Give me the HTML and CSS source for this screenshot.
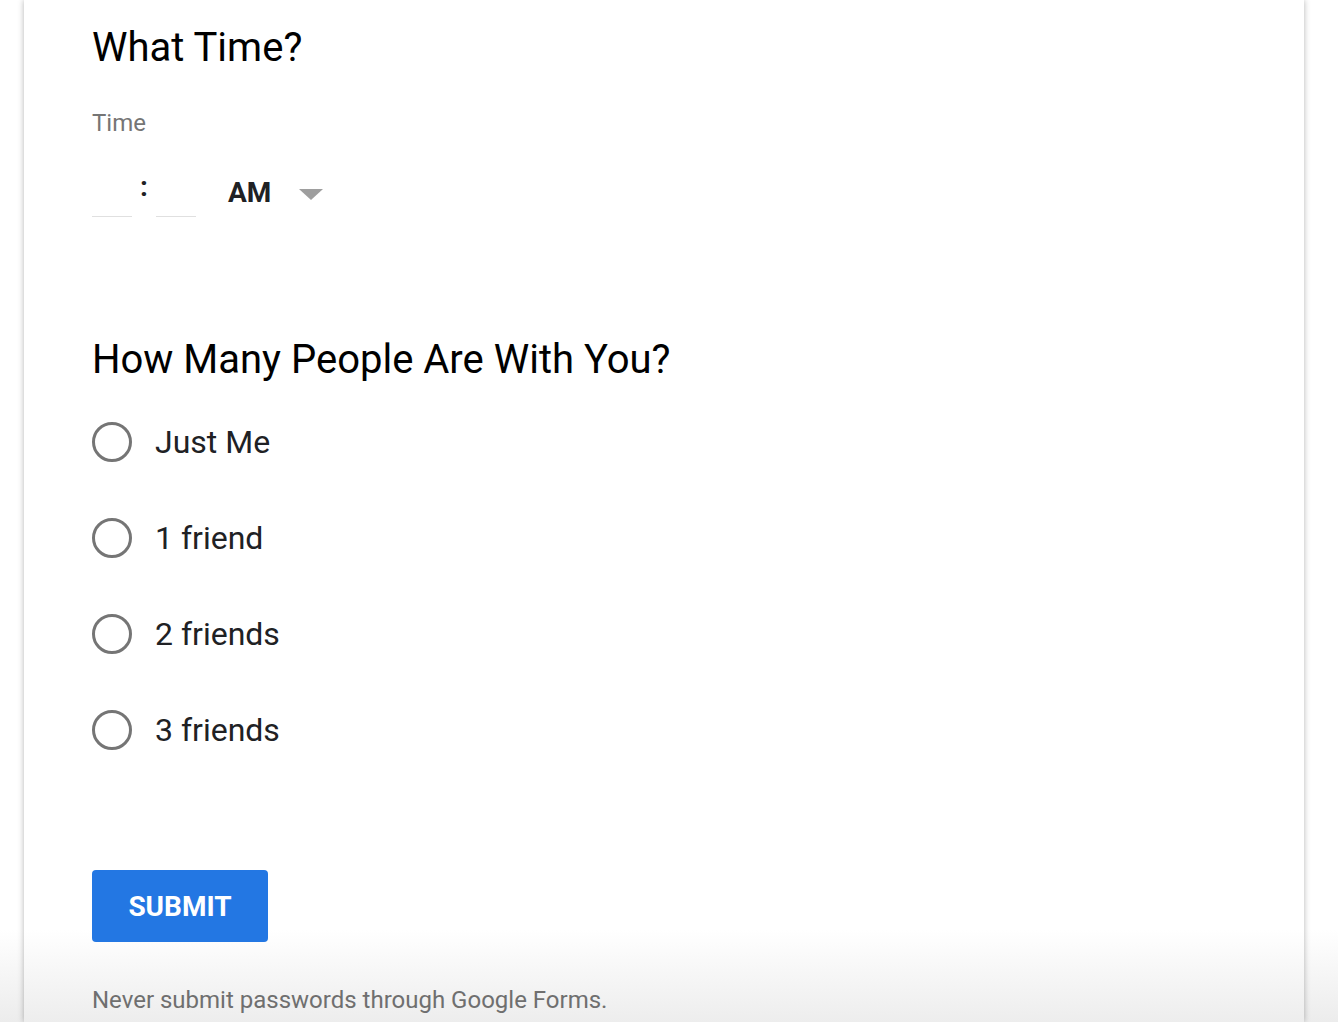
FILE: index.html
```html
<!DOCTYPE html>
<html>
<head>
<meta charset="utf-8">
<link rel="stylesheet" href="styles.css">
</head>
<body>
<div class="card">
  <section class="question">
    <h2 class="q-title q-first">What Time?</h2>
    <div class="label">Time</div>
    <div class="time-row">
      <span class="time-field"></span>
      <span class="colon">:</span>
      <span class="time-field"></span>
      <span class="ampm">AM</span>
      <span class="caret"></span>
    </div>
  </section>
  <section class="question">
    <h2 class="q-title q-second">How Many People Are With You?</h2>
    <div class="options">
      <div class="option"><span class="radio"></span><span class="opt-text">Just Me</span></div>
      <div class="option"><span class="radio"></span><span class="opt-text">1 friend</span></div>
      <div class="option"><span class="radio"></span><span class="opt-text">2 friends</span></div>
      <div class="option"><span class="radio"></span><span class="opt-text">3 friends</span></div>
    </div>
  </section>
  <div class="actions">
    <button class="submit">SUBMIT</button>
  </div>
  <p class="footer">Never submit passwords through Google Forms.</p>
</div>
</body>
</html>
```
FILE: styles.css
```css
html, body {
  margin: 0;
  padding: 0;
  height: 1022px;
  overflow: hidden;
}
body {
  font-family: Roboto, "Liberation Sans", sans-serif;
  background: linear-gradient(to bottom, #ffffff 0, #ffffff 930px, #ececec 1022px);
  padding-top: 0;
}
.card {
  margin-left: 24px;
  width: 1280px;
  height: 1022px;
  background: linear-gradient(to bottom, #ffffff 0, #ffffff 930px, #ededed 1022px);
  box-shadow: 0 0 6px rgba(0,0,0,0.3);
  padding-left: 68px;
  box-sizing: border-box;
}
.q-title {
  margin: 0;
  font-weight: 400;
  color: #000;
  font-size: 40px;
  line-height: 48px;
}
.q-first {
  padding-top: 24px;
}
.label {
  margin-top: 38px;
  font-size: 24px;
  line-height: 26px;
  color: #757575;
}
.time-row {
  display: flex;
  align-items: flex-end;
  margin-top: 35px;
  height: 46px;
}
.time-field {
  width: 40px;
  height: 0;
  border-bottom: 1px solid #e0e0e0;
}
.colon {
  width: 24px;
  text-align: center;
  font-size: 28px;
  font-weight: 700;
  color: #202124;
  align-self: flex-start;
  line-height: 26px;
  margin-top: 3px;
}
.ampm {
  margin-left: 32px;
  font-size: 28px;
  font-weight: 700;
  color: #202124;
  align-self: flex-start;
  line-height: 32px;
  margin-top: 6px;
}
.caret {
  align-self: flex-start;
  margin-left: 28px;
  margin-top: 18px;
  width: 0;
  height: 0;
  border-left: 12px solid transparent;
  border-right: 12px solid transparent;
  border-top: 11px solid #9e9e9e;
}
.q-second {
  margin-top: 119px;
}
.options {
  display: flex;
  flex-direction: column;
  gap: 56px;
  margin-top: 38px;
}
.option {
  display: flex;
  align-items: center;
  height: 40px;
}
.radio {
  width: 40px;
  height: 40px;
  box-sizing: border-box;
  border: 3px solid #757575;
  border-radius: 50%;
}
.opt-text {
  margin-left: 23px;
  font-size: 32px;
  color: #202124;
}
.actions {
  margin-top: 120px;
}
.submit {
  width: 176px;
  height: 72px;
  border: none;
  border-radius: 4px;
  background: #2377e3;
  color: #fff;
  font-family: Roboto, "Liberation Sans", sans-serif;
  font-size: 28px;
  font-weight: 700;
  padding: 0;
}
.footer {
  margin: 44px 0 0;
  font-size: 24px;
  color: #6f6f6f;
}
```
